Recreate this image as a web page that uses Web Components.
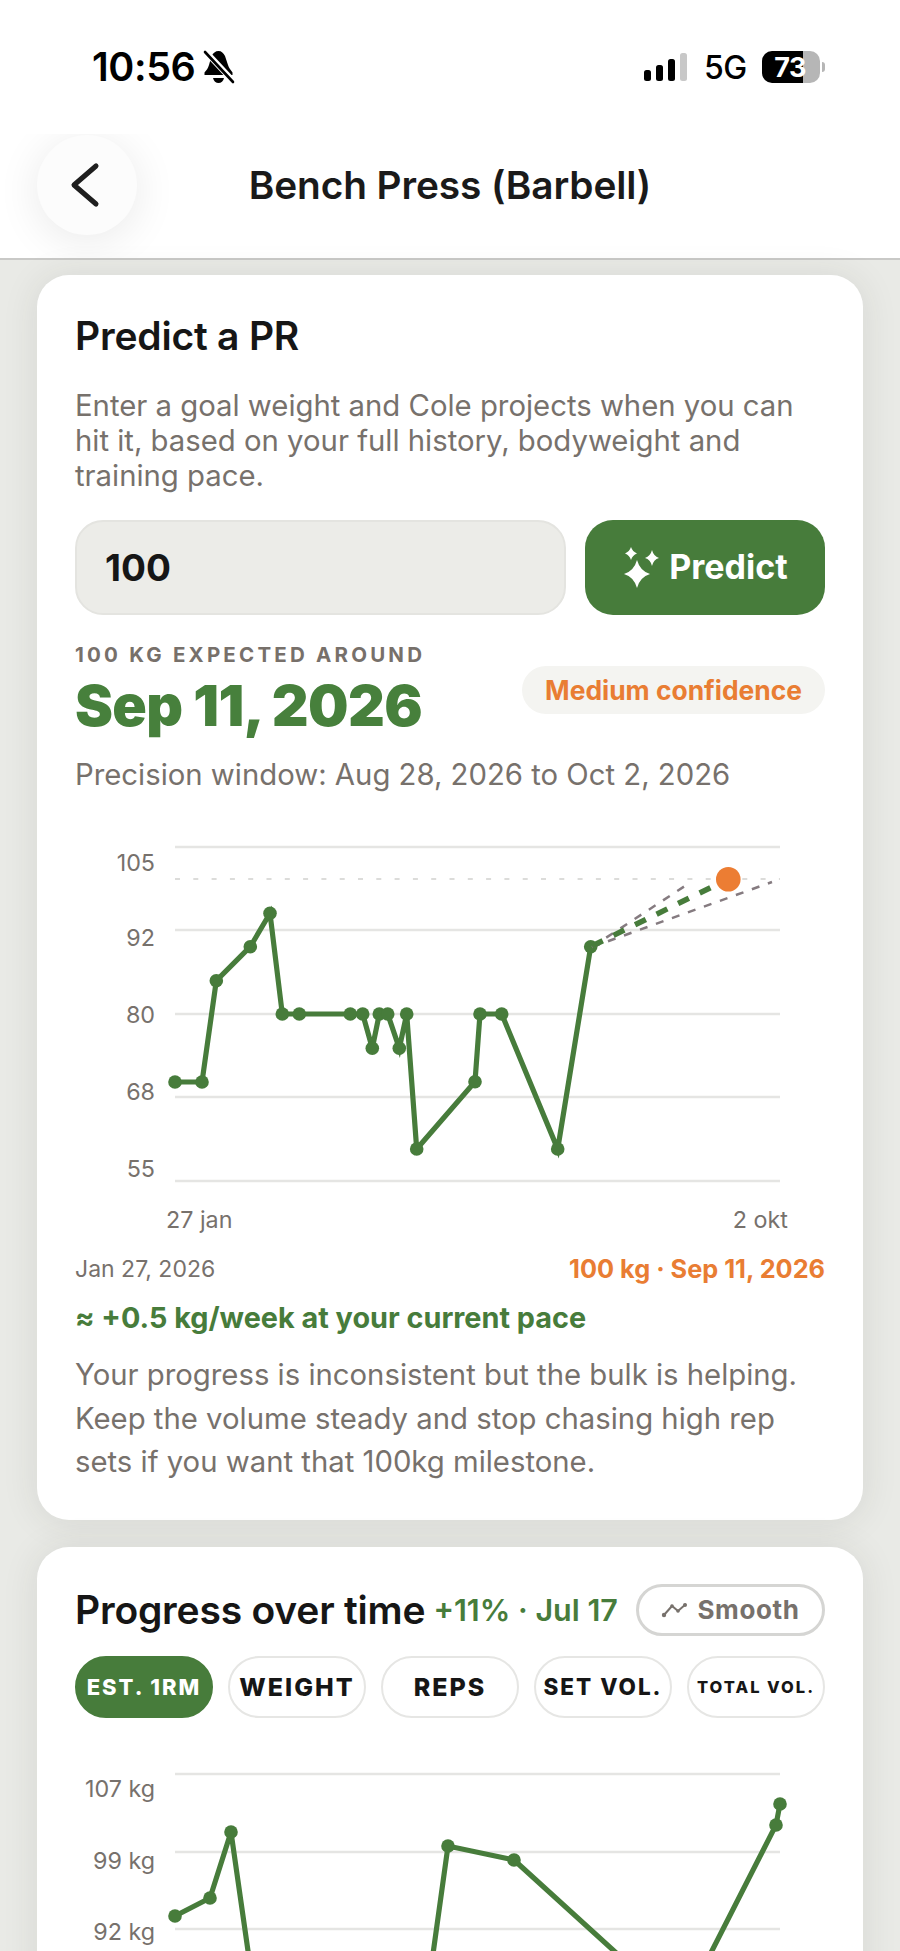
<!DOCTYPE html>
<html lang="en">
<head>
<meta charset="utf-8">
<title>Bench Press (Barbell)</title>
<style>
  html, body { margin: 0; padding: 0; }
  body {
    width: 900px;
    height: 1951px;
    overflow: hidden;
    background: #e9eae6;
    font-family: Inter, "Liberation Sans", sans-serif;
    color: #161616;
  }
  main { display: flex; flex-direction: column; gap: 27px; padding: 15px 37px 0; }
</style>
</head>
<body>
  <status-bar></status-bar>
  <app-header>Bench Press (Barbell)</app-header>
  <main>
    <app-card>
      <predict-panel></predict-panel>
    </app-card>
    <app-card>
      <progress-panel></progress-panel>
    </app-card>
  </main>

<script>
  const GREEN = '#477c3b';
  const ORANGE = '#e97d33';

  class StatusBar extends HTMLElement {
    connectedCallback() {
      this.attachShadow({ mode: 'open' });
      this.shadowRoot.innerHTML = `
        <style>
          :host { display: flex; align-items: center; justify-content: space-between; height: 134px; box-sizing: border-box; padding: 0 75px 0 92px; background: #fff; color: #000; }
          .left, .right { display: flex; align-items: center; }
          .time { font-size: 39.500px; font-weight: 600; letter-spacing: -.4px; line-height: 48px; }
          .bell { margin-left: 7px; }
          .net { font-size: 32px; font-weight: 500; margin: 0 15px 0 16px; letter-spacing: -.3px; }
          .batt { display: flex; align-items: center; justify-content: flex-end; box-sizing: border-box; width: 58px; height: 32px; border-radius: 10px; padding-right: 14px;
            background: linear-gradient(90deg, #000 0 41px, #b6b6b6 41px); color: #fff; font-size: 27px; font-weight: 700; letter-spacing: -.5px; }
          .nub { width: 3px; height: 10px; margin-left: 2px; border-radius: 0 3px 3px 0; background: #b6b6b6; }
        </style>
        <div class="left">
          <span class="time">10:56</span>
          <svg class="bell" width="33" height="34" viewBox="0 0 33 34">
            <path d="M16.5 1c3 0 5 2 6.5 5l3 9c.8 3 2.500 4.500 4.500 7.500v2.500H2.500V22.500c2-2.500 3.500-4 4.500-7.500l2.500-9C11 3 13.500 1 16.500 1z" fill="#000"/>
            <path d="M11 28h11c-.5 3-3 5-5.500 5s-5-2-5.500-5z" fill="#000"/>
            <path d="M3 1l29 31" stroke="#fff" stroke-width="6"/>
            <path d="M3 2l28 30" stroke="#000" stroke-width="2.600" stroke-linecap="round"/>
          </svg>
        </div>
        <div class="right">
          <svg width="44" height="29" viewBox="0 0 44 29">
            <rect x="0" y="17" width="7" height="11" rx="2.500" fill="#000"/>
            <rect x="12" y="12" width="7" height="16" rx="2.500" fill="#000"/>
            <rect x="24" y="6" width="7" height="22" rx="2.500" fill="#000"/>
            <rect x="36" y="0" width="7" height="28" rx="2.500" fill="#c8c8c8"/>
          </svg>
          <span class="net">5G</span>
          <span class="batt">73</span>
          <span class="nub"></span>
        </div>`;
    }
  }

  class AppHeader extends HTMLElement {
    connectedCallback() {
      this.attachShadow({ mode: 'open' });
      this.shadowRoot.innerHTML = `
        <style>
          :host { display: grid; grid-template-columns: 1fr auto 1fr; align-items: center; box-sizing: border-box; height: 126px; padding: 0 37px 22px; background: #fff; border-bottom: 2px solid #c9c9c7; overflow: hidden; }
          .back { display: flex; align-items: center; justify-content: center; width: 100px; height: 100px; border-radius: 50%; background: #fcfcfc; box-shadow: 0 6px 44px rgba(0,0,0,.09); }
          h1 { margin: 0; font-size: 38.800px; line-height: 46px; font-weight: 600; color: #1a1a1a; letter-spacing: -.1px; }
        </style>
        <div class="back">
          <svg width="40" height="50" viewBox="0 0 40 50"><path d="M29 6L7 25l22 19" fill="none" stroke="#1e1e1e" stroke-width="5" stroke-linecap="round" stroke-linejoin="round"/></svg>
        </div>
        <h1><slot></slot></h1>`;
    }
  }

  class AppCard extends HTMLElement {
    connectedCallback() {
      this.attachShadow({ mode: 'open' });
      this.shadowRoot.innerHTML = `
        <style>
          :host { display: block; background: #fff; border-radius: 32px; padding: 38px 38px 36px; box-shadow: 0 2px 36px rgba(50,52,40,.1); }
        </style>
        <slot></slot>`;
    }
  }

  // chart drawn in page coordinates, the viewBox picks out the part it shows
  class LineChart extends HTMLElement {
    set config(c) {
      const [vx, vy, vw, vh] = c.box;
      const grid = c.grid.map(y => `<line x1="175" x2="780" y1="${y}" y2="${y}" stroke="#e5e5e3" stroke-width="2.500"/>`).join('');
      const labels = c.labels.map(l => `<text x="${l.x}" y="${l.y}" text-anchor="${l.anchor || 'end'}" dominant-baseline="central">${l.t}</text>`).join('');
      const line = c.points.map(p => p.join(',')).join(' ');
      const dots = (c.dots || c.points).map(p => `<circle cx="${p[0]}" cy="${p[1]}" r="6.800" fill="${GREEN}"/>`).join('');
      this.attachShadow({ mode: 'open' });
      this.shadowRoot.innerHTML = `
        <style>
          :host { display: block; }
          svg { display: block; }
          text { font-size: 23.300px; fill: #77716c; }
        </style>
        <svg width="${vw}" height="${vh}" viewBox="${vx} ${vy} ${vw} ${vh}">
          ${grid}
          ${c.extra ? c.extra[0] : ''}
          ${labels}
          <polyline points="${line}" fill="none" stroke="${GREEN}" stroke-width="5.200"/>
          ${dots}
          ${c.extra ? c.extra[1] : ''}
        </svg>`;
    }
  }

  class PredictPanel extends HTMLElement {
    connectedCallback() {
      this.attachShadow({ mode: 'open' });
      this.shadowRoot.innerHTML = `
        <style>
          :host { display: block; }
          h2 { margin: 0; font-size: 39px; line-height: 45px; font-weight: 600; color: #161616; letter-spacing: -.2px; }
          .muted { color: #77716c; font-size: 29.300px; }
          .desc { margin: 30px 0 0; line-height: 35px; }
          .form { display: flex; gap: 19px; margin-top: 27px; height: 95px; }
          .field { flex: 1; display: flex; align-items: center; box-sizing: border-box; padding-left: 28px; background: #ecece8; border: 2px solid #e4e4e0; border-radius: 28px; font-size: 37px; font-weight: 700; color: #161616; }
          .btn { display: flex; align-items: center; justify-content: center; gap: 9px; width: 240px; background: ${GREEN}; border-radius: 28px; color: #fff; font-size: 34px; font-weight: 700; padding-bottom: 2px; box-sizing: border-box; }
          .result { display: flex; align-items: center; justify-content: space-between; margin-top: 28px; }
          .label { font-size: 20.500px; line-height: 24px; font-weight: 700; letter-spacing: 3.200px; color: #77706a; }
          .date { margin-top: 9px; font-size: 57px; line-height: 60px; font-weight: 900; color: #47803c; letter-spacing: -.6px; }
          .badge { padding: 0 23px; height: 48px; line-height: 48px; border-radius: 24px; background: #f4f4f1; color: ${ORANGE}; font-size: 26.400px; font-weight: 700; }
          .window { margin: 21px 0 0; line-height: 35px; }
          line-chart { margin-top: 38px; }
          .foot { display: flex; justify-content: space-between; margin-top: 15px; line-height: 28px; }
          .foot .from { font-size: 23px; color: #77716c; }
          .foot .to { font-size: 25.300px; font-weight: 700; color: ${ORANGE}; }
          .pace { margin-top: 19px; font-size: 28.800px; line-height: 32px; font-weight: 700; color: ${GREEN}; }
          .note { margin: 19px 0 0; line-height: 43.500px; }
        </style>
        <h2>Predict a PR</h2>
        <p class="muted desc">Enter a goal weight and Cole projects when you can hit it, based on your full history, bodyweight and training pace.</p>
        <div class="form">
          <div class="field">100</div>
          <div class="btn">
            <svg width="38" height="42" viewBox="0 0 38 42" fill="#fff">
              <path d="M15 14 Q18 25 28 28 Q18 31 15 42 Q12 31 2 28 Q12 25 15 14z"/>
              <path d="M9 1 Q10.500 5.500 15 7.500 Q10.500 9 9 14 Q7.500 9 3 7.500 Q7.500 5.500 9 1z"/>
              <path d="M30 4 Q31.500 10 37 12 Q31.500 13.500 30 20 Q28.500 13.500 23 12 Q28.500 10 30 4z"/>
            </svg>
            <span>Predict</span>
          </div>
        </div>
        <div class="result">
          <div>
            <div class="label">100 KG EXPECTED AROUND</div>
            <div class="date">Sep 11, 2026</div>
          </div>
          <div class="badge">Medium confidence</div>
        </div>
        <p class="muted window">Precision window: Aug 28, 2026 to Oct 2, 2026</p>
        <line-chart id="chart"></line-chart>
        <div class="foot"><span class="from">Jan 27, 2026</span><span class="to">100 kg · Sep 11, 2026</span></div>
        <div class="pace">≈ +0.5 kg/week at your current pace</div>
        <p class="muted note">Your progress is inconsistent but the bulk is helping. Keep the volume steady and stop chasing high rep sets if you want that 100kg milestone.</p>`;

      this.shadowRoot.getElementById('chart').config = {
        box: [75, 830, 751, 410],
        grid: [847, 930, 1014, 1097, 1181],
        labels: [
          { t: '105', x: 155, y: 862 }, { t: '92', x: 155, y: 937 }, { t: '80', x: 155, y: 1014 },
          { t: '68', x: 155, y: 1091 }, { t: '55', x: 155, y: 1168 },
          { t: '27 jan', x: 166, y: 1219, anchor: 'start' }, { t: '2 okt', x: 788, y: 1219 },
        ],
        points: [[175,1082],[202,1082],[216.300,980.700],[250.300,946.700],[270,913.300],[282.300,1014],[299.300,1014],[350.300,1014],[362.700,1014],[372.300,1048.300],[379.300,1014],[387.700,1014],[399.300,1048.300],[406.700,1014],[416.700,1149],[475,1081.700],[480,1014],[501.700,1014],[557.700,1149],[590.700,946.700]],
        extra: [
          `<line x1="175" x2="780" y1="879" y2="879" stroke="#dcdcda" stroke-width="2" stroke-dasharray="5 13.300"/>`,
          `<path d="M592 947L691 882M592 947L772 882" fill="none" stroke="#857b80" stroke-width="2.500" stroke-dasharray="8 9"/>
           <path d="M592 946L728 879" fill="none" stroke="${GREEN}" stroke-width="5.500" stroke-dasharray="12 12"/>
           <circle cx="728.300" cy="879.300" r="12.300" fill="#ec7d33"/>`,
        ],
      };
    }
  }

  class ProgressPanel extends HTMLElement {
    connectedCallback() {
      this.attachShadow({ mode: 'open' });
      this.shadowRoot.innerHTML = `
        <style>
          :host { display: block; }
          .head { display: flex; align-items: center; height: 52px; margin-top: -1px; }
          h2 { margin: 0; font-size: 39px; font-weight: 600; color: #161616; letter-spacing: -.2px; white-space: nowrap; }
          .delta { margin-left: 8px; font-size: 30.500px; font-weight: 600; color: ${GREEN}; white-space: nowrap; }
          .smooth { margin-left: auto; display: flex; align-items: center; justify-content: center; gap: 10px; box-sizing: border-box; width: 189px; height: 52px; border: 3px solid #d5d5d3; border-radius: 26px; color: #77716c; font-size: 26px; font-weight: 700; letter-spacing: .6px; }
          .chips { display: grid; grid-template-columns: repeat(5, 1fr); gap: 15px; margin-top: 20px; }
          line-chart { margin-top: 22px; }
        </style>
        <div class="head">
          <h2>Progress over time</h2>
          <span class="delta">+11% · Jul 17</span>
          <div class="smooth">
            <svg width="26" height="16" viewBox="0 0 26 16"><path d="M3 13l8-9 6 5 8-7" fill="none" stroke="#77716c" stroke-width="2"/><circle cx="3" cy="13" r="2.200" fill="#77716c"/><circle cx="11" cy="4" r="1.800" fill="#77716c"/><circle cx="17" cy="9" r="1.800" fill="#77716c"/><circle cx="24" cy="3" r="2" fill="#77716c"/></svg>
            <span>Smooth</span>
          </div>
        </div>
        <div class="chips">
          <metric-chip active size="22">EST. 1RM</metric-chip>
          <metric-chip size="25">WEIGHT</metric-chip>
          <metric-chip size="25">REPS</metric-chip>
          <metric-chip size="22.500">SET VOL.</metric-chip>
          <metric-chip size="16.500">TOTAL VOL.</metric-chip>
        </div>
        <line-chart id="chart"></line-chart>`;

      this.shadowRoot.getElementById('chart').config = {
        box: [75, 1740, 751, 300],
        grid: [1774, 1852, 1929],
        labels: [{ t: '107 kg', x: 155, y: 1788 }, { t: '99 kg', x: 155, y: 1860 }, { t: '92 kg', x: 155, y: 1931 }],
        // the line runs on below the window, so the off-page turns are only estimated
        points: [[175,1916],[210,1898],[231,1832],[253.600,1990],[428,1990],[448,1846],[514,1860],[657,1990],[692,1990],[776,1825],[780,1804]],
        dots: [[175,1916],[210,1898],[231,1832],[448,1846],[514,1860],[776,1825],[780,1804]],
      };
    }
  }

  class MetricChip extends HTMLElement {
    connectedCallback() {
      const size = this.getAttribute('size') || 24;
      this.attachShadow({ mode: 'open' });
      this.shadowRoot.innerHTML = `
        <style>
          :host { display: flex; align-items: center; justify-content: center; box-sizing: border-box; height: 62px; border: 2px solid #e6e6e4; border-radius: 31px; color: #161616; font-size: ${size}px; font-weight: 800; letter-spacing: 2px; white-space: nowrap; }
          :host([active]) { background: ${GREEN}; border-color: ${GREEN}; color: #fff; }
        </style>
        <slot></slot>`;
    }
  }

  customElements.define('status-bar', StatusBar);
  customElements.define('app-header', AppHeader);
  customElements.define('app-card', AppCard);
  customElements.define('line-chart', LineChart);
  customElements.define('metric-chip', MetricChip);
  customElements.define('predict-panel', PredictPanel);
  customElements.define('progress-panel', ProgressPanel);
</script>
</body>
</html>
